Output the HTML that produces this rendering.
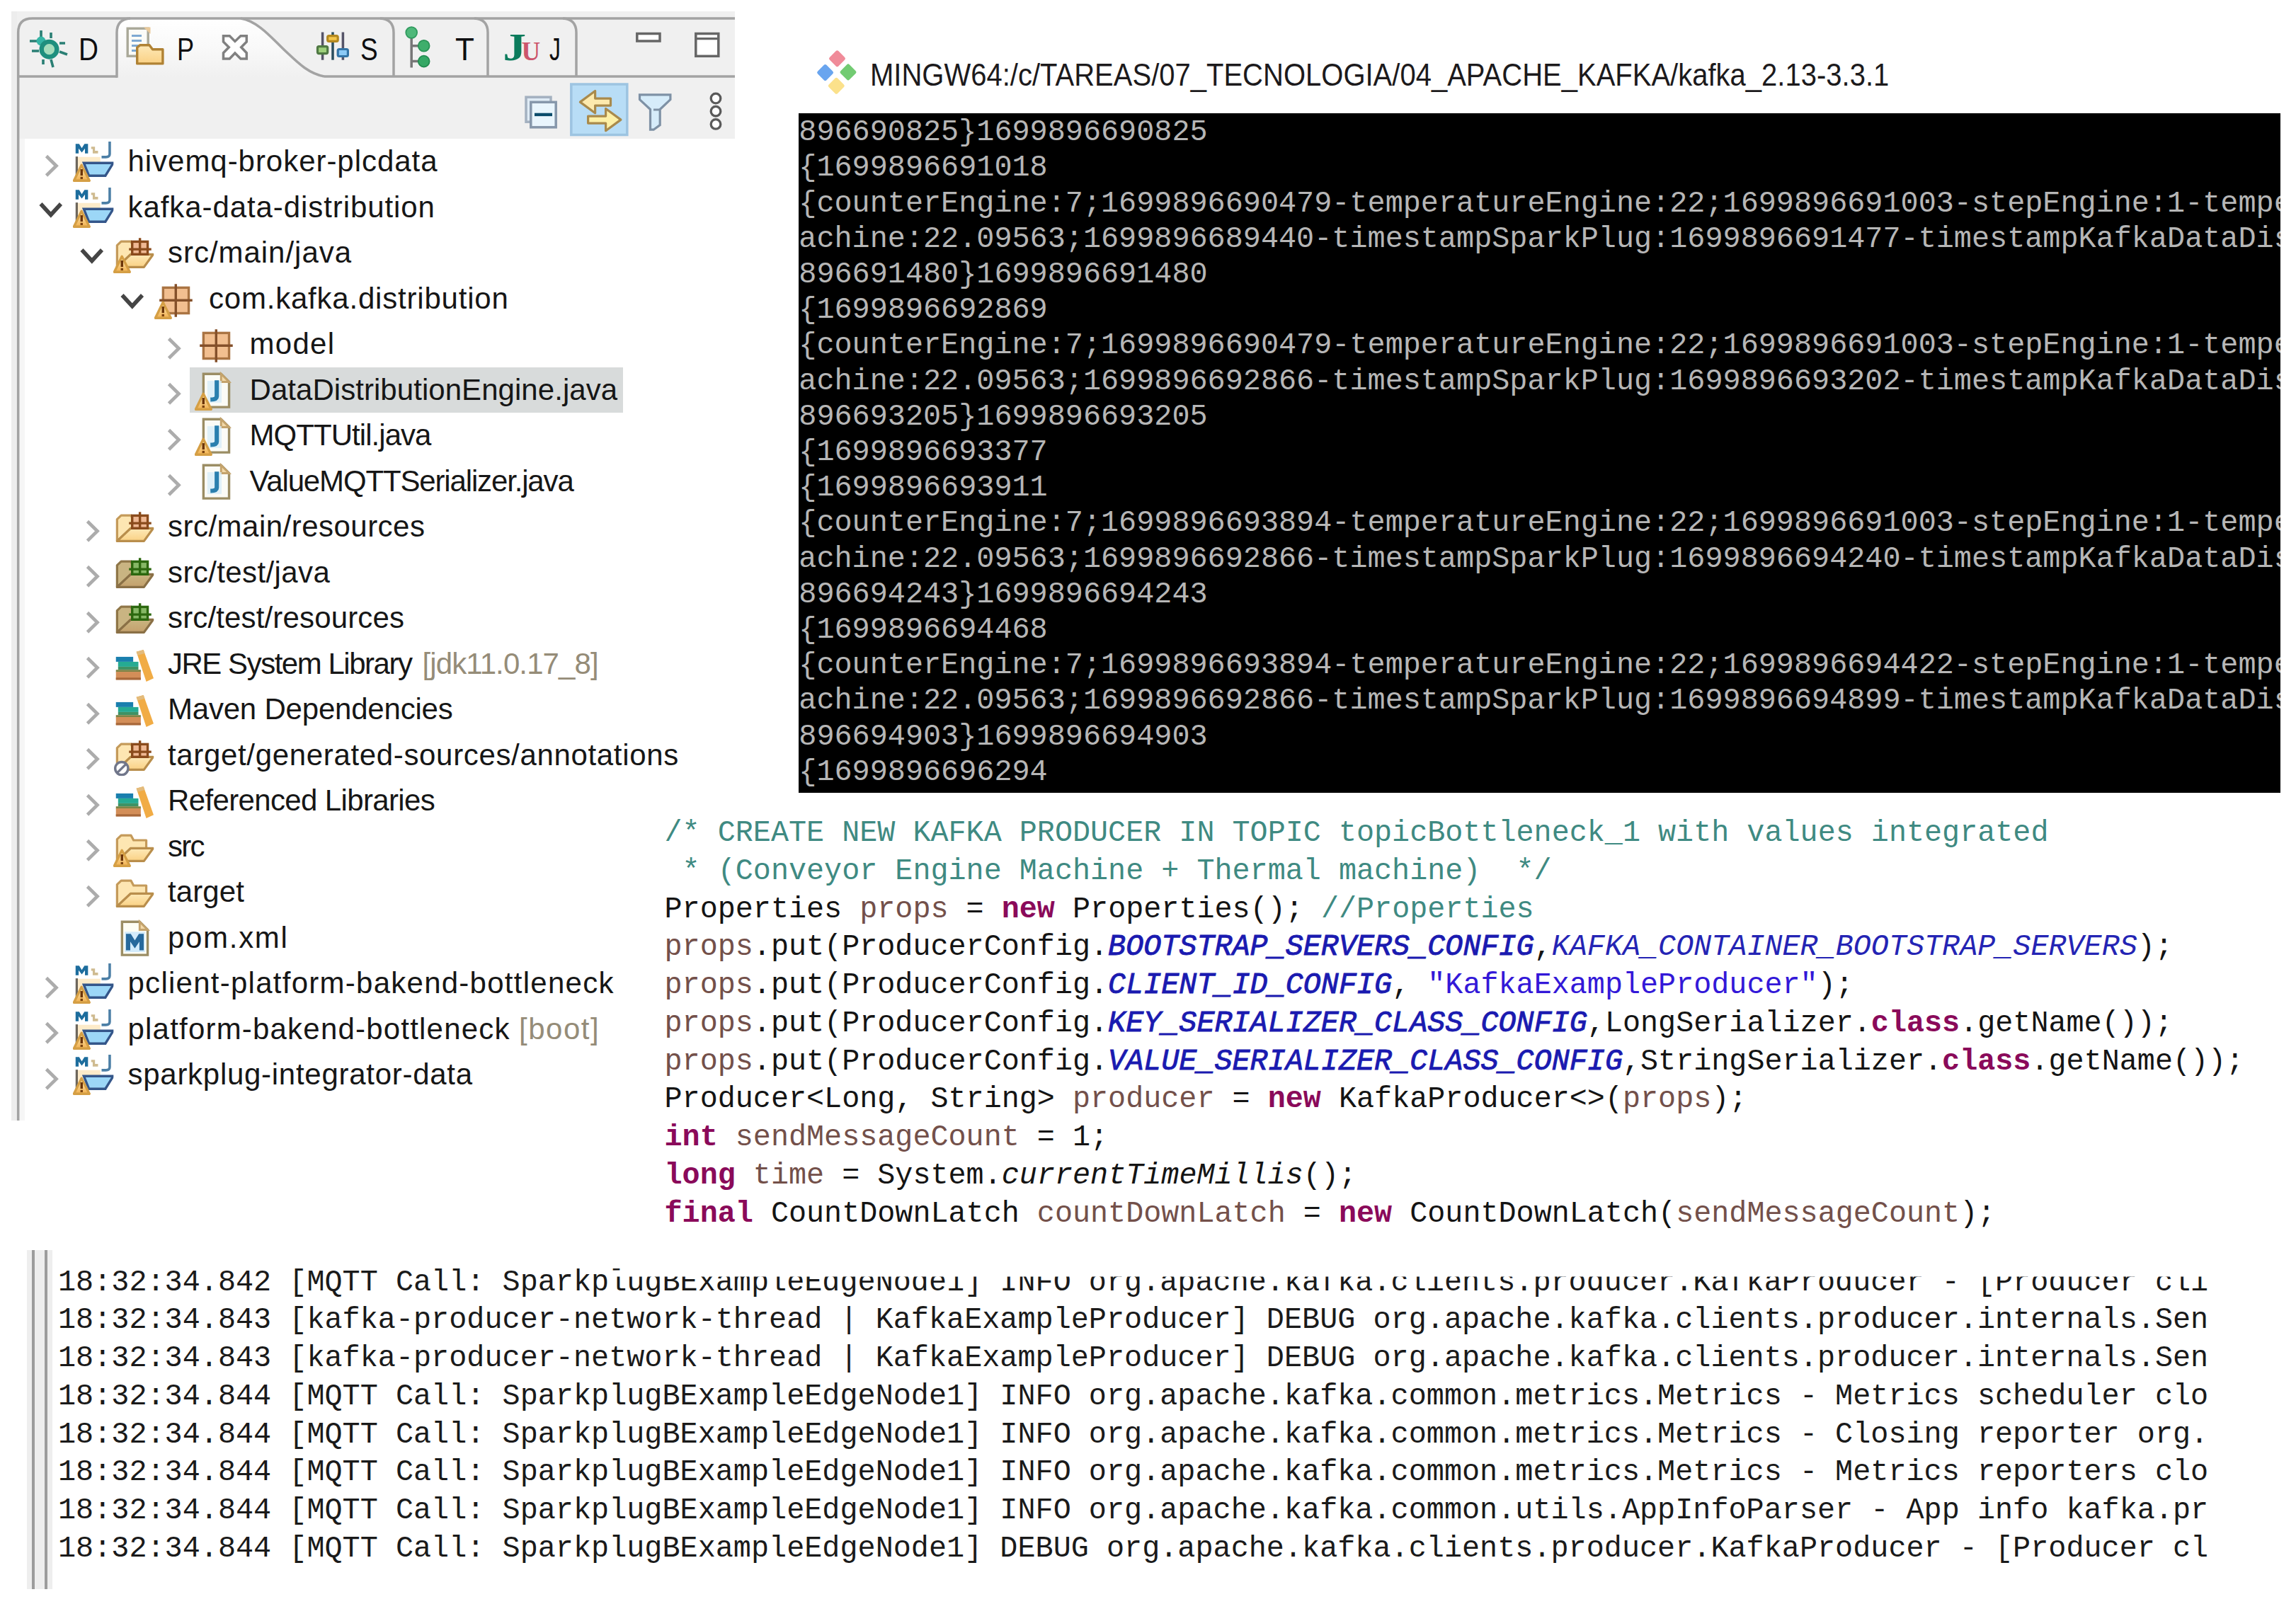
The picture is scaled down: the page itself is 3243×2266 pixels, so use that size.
<!DOCTYPE html>
<html lang="en">
<head>
<meta charset="utf-8">
<title>Kafka data distribution</title>
<style>
html,body{margin:0;padding:0;background:#fff;}
body{width:3243px;height:2266px;position:relative;overflow:hidden;font-family:"Liberation Sans",sans-serif;}
/* ---------- Eclipse panel ---------- */
#hdrbg{position:absolute;left:16px;top:16px;width:1022px;height:180px;background:#f0f0f0;}
#lbar{position:absolute;left:16px;top:16px;width:8px;height:1567px;background:#ededed;}
#lgut{position:absolute;left:27px;top:196px;width:8px;height:1387px;background:#f6f6f6;}
#hdr{position:absolute;left:0;top:0;width:1060px;height:1600px;}
.tabtxt{position:absolute;transform-origin:left center;font-size:44px;line-height:50px;color:#0e0e10;top:44.5px;}
/* ---------- tree ---------- */
.row{position:absolute;left:0;width:1040px;height:64.5px;white-space:nowrap;font-size:42px;line-height:64.5px;color:#161616;}
.row .t{position:absolute;top:0.8px;}
.row .dim{color:#958c78;}
.row svg{position:absolute;overflow:visible;}
.ic{width:57.33px;height:57.33px;top:4.5px;}
.ar{width:40px;height:64.5px;top:0;}
#sel{position:absolute;left:268px;top:518.5px;width:612px;height:64px;background:#d8dbdb;}
/* ---------- terminal ---------- */
#ttl{position:absolute;left:1228.7px;top:77.7px;font-size:45px;line-height:56px;color:#1c1a1c;white-space:nowrap;transform:scaleX(0.889);transform-origin:left center;}
#term{position:absolute;left:1127.5px;top:160px;width:2093.5px;height:960px;background:#000;overflow:hidden;}
#term pre{margin:0;position:absolute;left:0.8px;top:2.2px;font-family:"Liberation Mono",monospace;font-size:41.84px;line-height:50.2px;color:#b6b6b6;white-space:pre;}
/* ---------- code ---------- */
#code{position:absolute;left:938.5px;top:1151.2px;margin:0;font-family:"Liberation Mono",monospace;font-size:41.78px;line-height:53.75px;color:#141414;white-space:pre;}
#code .c{color:#3f8a82;}
#code .k{color:#8a0a5a;font-weight:bold;}
#code .v{color:#73504a;}
#code .s{color:#3318d8;}
#code .f{color:#1a1ab0;font-style:italic;-webkit-text-stroke:0.9px #1a1ab0;}
#code .g{color:#2424b4;font-style:italic;}
#code .i{font-style:italic;}
/* ---------- log ---------- */
#logwrap{position:absolute;left:0;top:1760px;width:3243px;height:480px;overflow:hidden;}
#log{position:absolute;left:82px;top:25.5px;margin:0;font-family:"Liberation Mono",monospace;font-size:41.83px;line-height:53.75px;color:#1a1a1a;white-space:pre;}
</style>
</head>
<body>

<!-- ================= SVG icon definitions ================= -->
<svg width="0" height="0" style="position:absolute">
<defs>
<linearGradient id="gw" x1="0" y1="0" x2="0" y2="1"><stop offset="0" stop-color="#fdf0c4"/><stop offset="1" stop-color="#f2b04e"/></linearGradient>
<linearGradient id="gtab" x1="0" y1="0" x2="0" y2="1"><stop offset="0" stop-color="#ffffff"/><stop offset="0.55" stop-color="#f8f8f8"/><stop offset="1" stop-color="#f0f0f0"/></linearGradient>
<linearGradient id="gfold" x1="0" y1="0" x2="0" y2="1"><stop offset="0" stop-color="#fde9b8"/><stop offset="1" stop-color="#fad184"/></linearGradient>
<linearGradient id="gtfold" x1="0" y1="0" x2="0" y2="1"><stop offset="0" stop-color="#c9b581"/><stop offset="1" stop-color="#c4a06c"/></linearGradient>

<symbol id="warn" viewBox="0 0 16 16">
  <path d="M3.4 9.3 L6.5 15.4 H0.4 Z" fill="url(#gw)" stroke="#d59f45" stroke-width="0.95" stroke-linejoin="round"/>
  <rect x="2.95" y="10.9" width="0.95" height="2.5" fill="#6a3308"/>
  <rect x="2.95" y="13.9" width="0.95" height="0.9" fill="#7a4210"/>
</symbol>

<symbol id="ignore" viewBox="0 0 16 16">
  <circle cx="3.3" cy="13" r="2.55" fill="#fdfdfd" stroke="#70768a" stroke-width="0.95"/>
  <path d="M1.6 14.7 L5 11.3" stroke="#70768a" stroke-width="0.9"/>
</symbol>

<symbol id="i-mj" viewBox="0 0 16 16">
  <path d="M1.5 13.6 V6.1 H10.8 V8.5 H4.4 Z" fill="#fdebc9"/>
  <rect x="1.05" y="5.9" width="0.9" height="7.7" fill="#6d665c"/>
  <path d="M4.3 8.45 H15.9 L12.8 13.45 H6.3 Z" fill="#9cd7f7" stroke="#34568a" stroke-width="0.95" stroke-linejoin="miter"/>
  <path d="M1.05 4.7 V0.9 H2.45 L3.5 2.55 L4.55 0.9 H5.95 V4.7 H4.75 V2.75 L3.5 4.3 L2.25 2.75 V4.7 Z" fill="#1d6d9d"/>
  <path d="M7.2 2 H8.7 V3.6 H9.9 V4.65 H7.8 V2.95 H7.2 Z" fill="#cfbb90"/>
  <path d="M14.5 0 V4.9 Q14.5 6.1 13 6.1 H11.3" fill="none" stroke="#4c7fa6" stroke-width="1"/>
</symbol>

<symbol id="i-folder" viewBox="0 0 16 16">
  <path d="M1.5 13.5 V4.9 L3.1 3.4 H7 L8 5.3 H13 V8.6 H6.8 Z" fill="#fde6b2" stroke="#c49a5a" stroke-width="0.9" stroke-linejoin="round"/>
  <path d="M1.5 13.5 L6.8 8.5 H15.7 L12.1 13.5 Z" fill="url(#gfold)" stroke="#b98e4c" stroke-width="0.9" stroke-linejoin="round"/>
</symbol>

<symbol id="i-srcf" viewBox="0 0 16 16">
  <path d="M1.5 13.5 V4.9 L3.1 3.4 H7 L8 5.3 H13 V8.6 H6.8 Z" fill="#fde6b2" stroke="#c49a5a" stroke-width="0.9" stroke-linejoin="round"/>
  <path d="M1.5 13.5 L6.8 8.5 H15.7 L12.1 13.5 Z" fill="url(#gfold)" stroke="#b98e4c" stroke-width="0.9" stroke-linejoin="round"/>
  <rect x="7.45" y="3.45" width="6.1" height="5" fill="#efb893" stroke="#8a4b1c" stroke-width="0.95"/>
  <path d="M10.5 2 V8.5 M6.2 6.45 H15" stroke="#8a4b1c" stroke-width="0.95"/>
</symbol>

<symbol id="i-testf" viewBox="0 0 16 16">
  <path d="M1.5 13.5 V4.9 L3.1 3.4 H7 L8 5.3 H13 V8.6 H6.8 Z" fill="#c9b482" stroke="#8f7648" stroke-width="0.9" stroke-linejoin="round"/>
  <path d="M1.5 13.5 L6.8 8.5 H15.7 L12.1 13.5 Z" fill="url(#gtfold)" stroke="#8a7046" stroke-width="0.9" stroke-linejoin="round"/>
  <rect x="7.45" y="3.45" width="6.1" height="5" fill="#86b866" stroke="#2c680f" stroke-width="0.95"/>
  <path d="M10.5 2 V8.5 M6.2 6.45 H15" stroke="#2c680f" stroke-width="0.95"/>
</symbol>

<symbol id="i-pkg" viewBox="0 0 16 16">
  <rect x="3.45" y="3.45" width="10.1" height="10.1" fill="#f2bf90" stroke="#aa7443" stroke-width="0.95"/>
  <path d="M8.45 2 V15 M2 8.45 H15" stroke="#84502a" stroke-width="0.95"/>
</symbol>

<symbol id="i-jfile" viewBox="0 0 16 16">
  <path d="M3.45 1.45 H10.4 L13.55 4.6 V14.55 H3.45 Z" fill="#fbfbf6" stroke="#9b8d64" stroke-width="0.95"/>
  <path d="M10.4 1.45 V4.6 H13.55 Z" fill="#f3d9a8" stroke="#c4a36c" stroke-width="0.8"/>
  <rect x="5" y="4.2" width="5.6" height="8.6" fill="#d6ecf8" opacity="0.75"/>
  <path d="M8.7 4 V10.3 Q8.7 11.5 6.2 11.6" fill="none" stroke="#2a7fae" stroke-width="1.7"/>
</symbol>

<symbol id="i-mfile" viewBox="0 0 16 16">
  <path d="M3.45 1.45 H10.4 L13.55 4.6 V14.55 H3.45 Z" fill="#fdfdf4" stroke="#9b8d64" stroke-width="0.95"/>
  <path d="M10.4 1.45 V4.6 H13.55 Z" fill="#f3d9a8" stroke="#c4a36c" stroke-width="0.8"/>
  <rect x="4.5" y="5.4" width="8" height="8" fill="#d3ebfb"/>
  <path d="M5 12.7 V6.2 H6.9 L8.5 8.8 L10.1 6.2 H12 V12.7 H10.3 V9.3 L8.5 11.9 L6.7 9.3 V12.7 Z" fill="#27699c"/>
</symbol>

<symbol id="i-lib" viewBox="0 0 16 16">
  <rect x="1.05" y="5" width="6.8" height="1.95" fill="#1a7fae"/>
  <rect x="1.9" y="6.95" width="8" height="1.95" fill="#25ab93"/>
  <rect x="1.9" y="8.9" width="8" height="1.2" fill="#3f9264"/>
  <rect x="1.05" y="10.1" width="9.8" height="0.9" fill="#7d8446"/>
  <rect x="1.05" y="10.9" width="9.8" height="3.1" fill="#d38e58"/>
  <rect x="1.05" y="13.2" width="9.8" height="0.9" fill="#a8683a"/>
  <path d="M9.1 3 L11.9 2.2 L15.9 13.5 L13 14.8 Z" fill="#f1ac45"/>
  <path d="M9.1 3 L11.9 2.2 L12.4 3.6 L9.6 4.4 Z" fill="#e3bb7c"/>
</symbol>
</defs>
</svg>

<!-- ================= Eclipse Package Explorer ================= -->
<div id="hdrbg"></div>
<div id="lbar"></div>
<div id="lgut"></div>
<svg id="hdr" viewBox="0 0 1060 1600">
  <!-- active tab body -->
  <path d="M165 109 V46 Q165 26 185 26 H340 C365 30 385 55 402 71 S435 104 458 108 V109 Z" fill="url(#gtab)"/>
  <!-- outlines -->
  <g fill="none" stroke="#a3a3a3" stroke-width="3.5">
    <path d="M25.7 1583 V46 Q25.7 26 45.7 26 H1038"/>
    <path d="M25.7 108 H165 M458 108 H1038"/>
    <path d="M165 109.7 V46 Q165 27 184 26"/>
    <path d="M340 26 C365 30 385 55 402 71 S435 104 458 108"/>
    <path d="M537 26 Q556 27 556 46 V108"/>
    <path d="M670 26 Q689 27 689 46 V108"/>
    <path d="M795 26 Q814 27 814 46 V108"/>
  </g>

  <!-- Debug (bug) icon -->
  <g stroke="#2a7f74" stroke-width="3.6" fill="none">
    <path d="M58 43 V55 M72 46 V54 M42 58 H54 M45 72 H55 M84 61 H92 M84 73 L95 77 M61 84 V91 M72 84 L75 95"/>
  </g>
  <circle cx="58" cy="58" r="6.5" fill="#35b5a5"/>
  <circle cx="69.5" cy="69.7" r="10.8" fill="#a5dcbc" stroke="#1f8f7e" stroke-width="6.4"/>

  <!-- Package explorer icon -->
  <rect x="180.2" y="40.2" width="29" height="39" fill="#fbfbf7" stroke="#a9a898" stroke-width="3.4"/>
  <path d="M203 38.5 L212.5 48 V38.5 Z" fill="#e9c99a"/>
  <path d="M186 50.5 H200 M186 57.5 H200 M186 64.5 H196 M186 71.5 H194" stroke="#7ea9d2" stroke-width="3.2"/>
  <path d="M193.7 89.9 V67 L198 63.7 H211 L215.5 69.7 H229.9 V89.9 Z" fill="url(#gfold)" stroke="#b08234" stroke-width="3.4" stroke-linejoin="round"/>

  <!-- close X -->
  <path d="M315.5 50.8 H324.3 L331.9 58.4 L339.9 50.8 H348.3 V59 L340.7 66.7 L348.3 74.7 V83 H339.9 L331.9 75 L324.3 83 H315.5 V74.7 L323.3 66.7 L315.5 59 Z" fill="#ffffff" stroke="#808080" stroke-width="3.5" stroke-linejoin="miter"/>

  <!-- sliders icon -->
  <path d="M455.6 45.4 V84.7 M484.4 45.4 V84.7" stroke="#555468" stroke-width="3.5"/>
  <path d="M470 45.4 V84.7" stroke="#2b4e5e" stroke-width="3.5"/>
  <rect x="448.5" y="65.6" width="14.2" height="10" rx="2" fill="#9ed07c" stroke="#4f7843" stroke-width="3.2"/>
  <rect x="462.7" y="50.6" width="14.5" height="7.8" rx="2" fill="#f4c64a" stroke="#b3881f" stroke-width="3.2"/>
  <rect x="477.2" y="69.5" width="14.2" height="10" rx="2" fill="#8ccaf6" stroke="#3374a6" stroke-width="3.2"/>

  <!-- hierarchy icon -->
  <path d="M581.2 50 V95.4 M581.2 64.7 H596 M581.2 86.6 H596" stroke="#767676" stroke-width="3.5" fill="none"/>
  <circle cx="581.2" cy="46" r="7.9" fill="#4fb87a" stroke="#2f9a5e" stroke-width="1.8"/>
  <circle cx="598.7" cy="64.7" r="7.9" fill="#3fae6c" stroke="#2a9356" stroke-width="1.8"/>
  <circle cx="598.7" cy="86.6" r="7.9" fill="#35a865" stroke="#238c50" stroke-width="1.8"/>

  <!-- JUnit icon -->
  <text transform="translate(710.5 84.6) scale(1.18 1)" font-family="Liberation Serif, serif" font-weight="bold" font-size="55" fill="#0b7b5c">J</text>
  <text x="736.5" y="84.6" font-family="Liberation Serif, serif" font-weight="bold" font-size="37" fill="#cc566c">U</text>

  <!-- minimize / maximize -->
  <rect x="899.8" y="47.5" width="32.2" height="10.5" fill="#ffffff" stroke="#666666" stroke-width="3.5"/>
  <rect x="982.8" y="47.5" width="32" height="31.8" fill="#ffffff" stroke="#666666" stroke-width="3.5"/>
  <path d="M982.8 54.6 H1014.8" stroke="#666666" stroke-width="3.3"/>

  <!-- toolbar: collapse all -->
  <rect x="743" y="137.2" width="35" height="35" fill="#dfebf5" stroke="#a4b1c0" stroke-width="3.5"/>
  <rect x="749.8" y="144.3" width="35.4" height="35.5" fill="#e9f5fd" stroke="#8697ab" stroke-width="3.5"/>
  <rect x="755" y="159.7" width="25" height="4.4" fill="#0b4c6c"/>
  <!-- toolbar: link with editor (toggled) -->
  <rect x="806.8" y="119" width="79" height="71.5" fill="#b8ddf6" stroke="#9dc4e1" stroke-width="3.5"/>
  <path d="M819.4 144.1 L840.6 128.5 V139.1 H862.5 V149.1 H840.6 V159.7 Z" fill="#fdeaae" stroke="#a98a4c" stroke-width="3.2" stroke-linejoin="round"/>
  <path d="M876.9 169.1 L855.6 153.5 V164.1 H830.6 V174.1 H855.6 V184.7 Z" fill="#fdf0a6" stroke="#a98a4c" stroke-width="3.2" stroke-linejoin="round"/>
  <!-- toolbar: filter -->
  <path d="M903.5 133.9 H946.9 V140.6 L932.2 154.5 V176.6 L923.2 183.2 H918.5 V154.5 L903.5 140.6 Z" fill="#d6ecfa" stroke="#7e91a5" stroke-width="3.2" stroke-linejoin="miter"/>
  <path d="M923 155 H931" stroke="#7e91a5" stroke-width="3"/>
  <!-- toolbar: view menu -->
  <circle cx="1011" cy="139" r="6.8" fill="#ffffff" stroke="#5a5a5a" stroke-width="3.3"/>
  <circle cx="1011" cy="157.2" r="6.8" fill="#ffffff" stroke="#5a5a5a" stroke-width="3.3"/>
  <circle cx="1011" cy="175.4" r="6.8" fill="#ffffff" stroke="#5a5a5a" stroke-width="3.3"/>
</svg>
<span class="tabtxt" style="left:110.5px;transform:scaleX(.88)">D</span>
<span class="tabtxt" style="left:250px;transform:scaleX(.82)">P</span>
<span class="tabtxt" style="left:509px;transform:scaleX(.84)">S</span>
<span class="tabtxt" style="left:643px">T</span>
<span class="tabtxt" style="left:776px;transform:scaleX(.72)">J</span>

<!-- tree rows -->
<div id="tree">
<div id="sel"></div>
<div class="row" style="top:195.5px"><svg class="ar" viewBox="0 0 40 64.5" style="left:63px"><path d="M2.5 24.5 L16.5 38.3 L2.5 52" fill="none" stroke="#acacac" stroke-width="4.7"/></svg><svg class="ic" viewBox="0 0 16 16" style="left:102.5px"><use href="#i-mj"/><use href="#warn"/></svg><span class="t" style="left:180.5px;letter-spacing:0.96px">hivemq-broker-plcdata</span></div>
<div class="row" style="top:260px"><svg class="ar" viewBox="0 0 40 64.5" style="left:52px"><path d="M5.5 28 L19.8 43.5 L34 28" fill="none" stroke="#454545" stroke-width="5.6"/></svg><svg class="ic" viewBox="0 0 16 16" style="left:102.5px"><use href="#i-mj"/><use href="#warn"/></svg><span class="t" style="left:180.5px;letter-spacing:0.92px">kafka-data-distribution</span></div>
<div class="row" style="top:324.5px"><svg class="ar" viewBox="0 0 40 64.5" style="left:109.5px"><path d="M5.5 28 L19.8 43.5 L34 28" fill="none" stroke="#454545" stroke-width="5.6"/></svg><svg class="ic" viewBox="0 0 16 16" style="left:160px"><use href="#i-srcf"/><use href="#warn"/></svg><span class="t" style="left:237px;letter-spacing:0.97px">src/main/java</span></div>
<div class="row" style="top:389px"><svg class="ar" viewBox="0 0 40 64.5" style="left:167px"><path d="M5.5 28 L19.8 43.5 L34 28" fill="none" stroke="#454545" stroke-width="5.6"/></svg><svg class="ic" viewBox="0 0 16 16" style="left:217.5px"><use href="#i-pkg"/><use href="#warn"/></svg><span class="t" style="left:295px;letter-spacing:0.79px">com.kafka.distribution</span></div>
<div class="row" style="top:453.5px"><svg class="ar" viewBox="0 0 40 64.5" style="left:235.5px"><path d="M2.5 24.5 L16.5 38.3 L2.5 52" fill="none" stroke="#acacac" stroke-width="4.7"/></svg><svg class="ic" viewBox="0 0 16 16" style="left:275px"><use href="#i-pkg"/></svg><span class="t" style="left:352.5px;letter-spacing:1.27px">model</span></div>
<div class="row" style="top:518px"><svg class="ar" viewBox="0 0 40 64.5" style="left:235.5px"><path d="M2.5 24.5 L16.5 38.3 L2.5 52" fill="none" stroke="#acacac" stroke-width="4.7"/></svg><svg class="ic" viewBox="0 0 16 16" style="left:275px"><use href="#i-jfile"/><use href="#warn"/></svg><span class="t" style="left:352.5px;letter-spacing:0.05px">DataDistributionEngine.java</span></div>
<div class="row" style="top:582.5px"><svg class="ar" viewBox="0 0 40 64.5" style="left:235.5px"><path d="M2.5 24.5 L16.5 38.3 L2.5 52" fill="none" stroke="#acacac" stroke-width="4.7"/></svg><svg class="ic" viewBox="0 0 16 16" style="left:275px"><use href="#i-jfile"/><use href="#warn"/></svg><span class="t" style="left:352.5px;letter-spacing:-0.95px">MQTTUtil.java</span></div>
<div class="row" style="top:647px"><svg class="ar" viewBox="0 0 40 64.5" style="left:235.5px"><path d="M2.5 24.5 L16.5 38.3 L2.5 52" fill="none" stroke="#acacac" stroke-width="4.7"/></svg><svg class="ic" viewBox="0 0 16 16" style="left:275px"><use href="#i-jfile"/></svg><span class="t" style="left:352.5px;letter-spacing:-1.15px">ValueMQTTSerializer.java</span></div>
<div class="row" style="top:711.5px"><svg class="ar" viewBox="0 0 40 64.5" style="left:120.5px"><path d="M2.5 24.5 L16.5 38.3 L2.5 52" fill="none" stroke="#acacac" stroke-width="4.7"/></svg><svg class="ic" viewBox="0 0 16 16" style="left:160px"><use href="#i-srcf"/></svg><span class="t" style="left:237px;letter-spacing:0.48px">src/main/resources</span></div>
<div class="row" style="top:776px"><svg class="ar" viewBox="0 0 40 64.5" style="left:120.5px"><path d="M2.5 24.5 L16.5 38.3 L2.5 52" fill="none" stroke="#acacac" stroke-width="4.7"/></svg><svg class="ic" viewBox="0 0 16 16" style="left:160px"><use href="#i-testf"/></svg><span class="t" style="left:237px;letter-spacing:0.39px">src/test/java</span></div>
<div class="row" style="top:840.5px"><svg class="ar" viewBox="0 0 40 64.5" style="left:120.5px"><path d="M2.5 24.5 L16.5 38.3 L2.5 52" fill="none" stroke="#acacac" stroke-width="4.7"/></svg><svg class="ic" viewBox="0 0 16 16" style="left:160px"><use href="#i-testf"/></svg><span class="t" style="left:237px;letter-spacing:0.15px">src/test/resources</span></div>
<div class="row" style="top:905px"><svg class="ar" viewBox="0 0 40 64.5" style="left:120.5px"><path d="M2.5 24.5 L16.5 38.3 L2.5 52" fill="none" stroke="#acacac" stroke-width="4.7"/></svg><svg class="ic" viewBox="0 0 16 16" style="left:160px"><use href="#i-lib"/></svg><span class="t" style="left:237px;letter-spacing:-1.48px">JRE System Library</span><span class="t dim" style="left:596.5px;letter-spacing:-0.89px">[jdk11.0.17_8]</span></div>
<div class="row" style="top:969.5px"><svg class="ar" viewBox="0 0 40 64.5" style="left:120.5px"><path d="M2.5 24.5 L16.5 38.3 L2.5 52" fill="none" stroke="#acacac" stroke-width="4.7"/></svg><svg class="ic" viewBox="0 0 16 16" style="left:160px"><use href="#i-lib"/></svg><span class="t" style="left:237px;letter-spacing:-0.21px">Maven Dependencies</span></div>
<div class="row" style="top:1034px"><svg class="ar" viewBox="0 0 40 64.5" style="left:120.5px"><path d="M2.5 24.5 L16.5 38.3 L2.5 52" fill="none" stroke="#acacac" stroke-width="4.7"/></svg><svg class="ic" viewBox="0 0 16 16" style="left:160px"><use href="#i-srcf"/><use href="#ignore"/></svg><span class="t" style="left:237px;letter-spacing:0.66px">target/generated-sources/annotations</span></div>
<div class="row" style="top:1098.5px"><svg class="ar" viewBox="0 0 40 64.5" style="left:120.5px"><path d="M2.5 24.5 L16.5 38.3 L2.5 52" fill="none" stroke="#acacac" stroke-width="4.7"/></svg><svg class="ic" viewBox="0 0 16 16" style="left:160px"><use href="#i-lib"/></svg><span class="t" style="left:237px;letter-spacing:-0.64px">Referenced Libraries</span></div>
<div class="row" style="top:1163px"><svg class="ar" viewBox="0 0 40 64.5" style="left:120.5px"><path d="M2.5 24.5 L16.5 38.3 L2.5 52" fill="none" stroke="#acacac" stroke-width="4.7"/></svg><svg class="ic" viewBox="0 0 16 16" style="left:160px"><use href="#i-folder"/><use href="#warn"/></svg><span class="t" style="left:237px;letter-spacing:-1.70px">src</span></div>
<div class="row" style="top:1227.5px"><svg class="ar" viewBox="0 0 40 64.5" style="left:120.5px"><path d="M2.5 24.5 L16.5 38.3 L2.5 52" fill="none" stroke="#acacac" stroke-width="4.7"/></svg><svg class="ic" viewBox="0 0 16 16" style="left:160px"><use href="#i-folder"/></svg><span class="t" style="left:237px;letter-spacing:0.12px">target</span></div>
<div class="row" style="top:1292px"><svg class="ic" viewBox="0 0 16 16" style="left:160px"><use href="#i-mfile"/></svg><span class="t" style="left:237px;letter-spacing:1.70px">pom.xml</span></div>
<div class="row" style="top:1356.5px"><svg class="ar" viewBox="0 0 40 64.5" style="left:63px"><path d="M2.5 24.5 L16.5 38.3 L2.5 52" fill="none" stroke="#acacac" stroke-width="4.7"/></svg><svg class="ic" viewBox="0 0 16 16" style="left:102.5px"><use href="#i-mj"/><use href="#warn"/></svg><span class="t" style="left:180.5px;letter-spacing:1.26px">pclient-platform-bakend-bottleneck</span></div>
<div class="row" style="top:1421px"><svg class="ar" viewBox="0 0 40 64.5" style="left:63px"><path d="M2.5 24.5 L16.5 38.3 L2.5 52" fill="none" stroke="#acacac" stroke-width="4.7"/></svg><svg class="ic" viewBox="0 0 16 16" style="left:102.5px"><use href="#i-mj"/><use href="#warn"/></svg><span class="t" style="left:180.5px;letter-spacing:1.20px">platform-bakend-bottleneck</span><span class="t dim" style="left:733px;letter-spacing:1.52px">[boot]</span></div>
<div class="row" style="top:1485.5px"><svg class="ar" viewBox="0 0 40 64.5" style="left:63px"><path d="M2.5 24.5 L16.5 38.3 L2.5 52" fill="none" stroke="#acacac" stroke-width="4.7"/></svg><svg class="ic" viewBox="0 0 16 16" style="left:102.5px"><use href="#i-mj"/><use href="#warn"/></svg><span class="t" style="left:180.5px;letter-spacing:0.72px">sparkplug-integrator-data</span></div>
</div>

<!-- ================= MINGW64 terminal ================= -->
<svg style="position:absolute;left:1145px;top:66px;width:76px;height:74px" viewBox="1145 66 76 74">
  <rect x="-8.8" y="-8.8" width="17.6" height="17.6" rx="2.5" transform="translate(1182.5 82.8) rotate(45)" fill="#f08b99"/>
  <rect x="-8.8" y="-8.8" width="17.6" height="17.6" rx="2.5" transform="translate(1165.6 102.5) rotate(45)" fill="#69a5ef"/>
  <rect x="-8.8" y="-8.8" width="17.6" height="17.6" rx="2.5" transform="translate(1198 101.9) rotate(45)" fill="#72cb72"/>
  <rect x="-8.8" y="-8.8" width="17.6" height="17.6" rx="2.5" transform="translate(1181.3 121.2) rotate(45)" fill="#fbe18b"/>
</svg>
<div id="ttl">MINGW64:/c/TAREAS/07_TECNOLOGIA/04_APACHE_KAFKA/kafka_2.13-3.3.1</div>
<div id="term"><pre>896690825}1699896690825
{1699896691018
{counterEngine:7;1699896690479-temperatureEngine:22;1699896691003-stepEngine:1-temperatureM
achine:22.09563;1699896689440-timestampSparkPlug:1699896691477-timestampKafkaDataDistribution:1699
896691480}1699896691480
{1699896692869
{counterEngine:7;1699896690479-temperatureEngine:22;1699896691003-stepEngine:1-temperatureM
achine:22.09563;1699896692866-timestampSparkPlug:1699896693202-timestampKafkaDataDistribution:1699
896693205}1699896693205
{1699896693377
{1699896693911
{counterEngine:7;1699896693894-temperatureEngine:22;1699896691003-stepEngine:1-temperatureM
achine:22.09563;1699896692866-timestampSparkPlug:1699896694240-timestampKafkaDataDistribution:1699
896694243}1699896694243
{1699896694468
{counterEngine:7;1699896693894-temperatureEngine:22;1699896694422-stepEngine:1-temperatureM
achine:22.09563;1699896692866-timestampSparkPlug:1699896694899-timestampKafkaDataDistribution:1699
896694903}1699896694903
{1699896696294</pre></div>

<!-- ================= Java code ================= -->
<pre id="code"><span class="c">/* CREATE NEW KAFKA PRODUCER IN TOPIC topicBottleneck_1 with values integrated</span>
<span class="c"> * (Conveyor Engine Machine + Thermal machine)  */</span>
Properties <span class="v">props</span> = <span class="k">new</span> Properties(); <span class="c">//Properties</span>
<span class="v">props</span>.put(ProducerConfig.<span class="f">BOOTSTRAP_SERVERS_CONFIG</span>,<span class="g">KAFKA_CONTAINER_BOOTSTRAP_SERVERS</span>);
<span class="v">props</span>.put(ProducerConfig.<span class="f">CLIENT_ID_CONFIG</span>, <span class="s">"KafkaExampleProducer"</span>);
<span class="v">props</span>.put(ProducerConfig.<span class="f">KEY_SERIALIZER_CLASS_CONFIG</span>,LongSerializer.<span class="k">class</span>.getName());
<span class="v">props</span>.put(ProducerConfig.<span class="f">VALUE_SERIALIZER_CLASS_CONFIG</span>,StringSerializer.<span class="k">class</span>.getName());
Producer&lt;Long, String&gt; <span class="v">producer</span> = <span class="k">new</span> KafkaProducer&lt;&gt;(<span class="v">props</span>);
<span class="k">int</span> <span class="v">sendMessageCount</span> = 1;
<span class="k">long</span> <span class="v">time</span> = System.<span class="i">currentTimeMillis</span>();
<span class="k">final</span> CountDownLatch <span class="v">countDownLatch</span> = <span class="k">new</span> CountDownLatch(<span class="v">sendMessageCount</span>);</pre>

<!-- ================= Console log ================= -->
<div id="loggut" style="position:absolute;left:38px;top:1766px;width:35.5px;height:479px;background:#eeeeee"></div>
<div style="position:absolute;left:45px;top:1766px;width:3.7px;height:479px;background:#9c9c9c"></div>
<div style="position:absolute;left:63.2px;top:1766px;width:3.8px;height:479px;background:#9c9c9c"></div>
<div id="logwrap"><pre id="log">18:32:34.842 [MQTT Call: SparkplugBExampleEdgeNode1] INFO org.apache.kafka.clients.producer.KafkaProducer - [Producer cli
18:32:34.843 [kafka-producer-network-thread | KafkaExampleProducer] DEBUG org.apache.kafka.clients.producer.internals.Sen
18:32:34.843 [kafka-producer-network-thread | KafkaExampleProducer] DEBUG org.apache.kafka.clients.producer.internals.Sen
18:32:34.844 [MQTT Call: SparkplugBExampleEdgeNode1] INFO org.apache.kafka.common.metrics.Metrics - Metrics scheduler clo
18:32:34.844 [MQTT Call: SparkplugBExampleEdgeNode1] INFO org.apache.kafka.common.metrics.Metrics - Closing reporter org.
18:32:34.844 [MQTT Call: SparkplugBExampleEdgeNode1] INFO org.apache.kafka.common.metrics.Metrics - Metrics reporters clo
18:32:34.844 [MQTT Call: SparkplugBExampleEdgeNode1] INFO org.apache.kafka.common.utils.AppInfoParser - App info kafka.pr
18:32:34.844 [MQTT Call: SparkplugBExampleEdgeNode1] DEBUG org.apache.kafka.clients.producer.KafkaProducer - [Producer cl</pre></div>
<svg style="position:absolute;left:0;top:1780px;width:3243px;height:30px" viewBox="0 1780 3243 30"><path d="M857 1794.8 L1100 1791 L3243 1788 V1803.6 H857 Z" fill="#ffffff"/></svg>

</body>
</html>
